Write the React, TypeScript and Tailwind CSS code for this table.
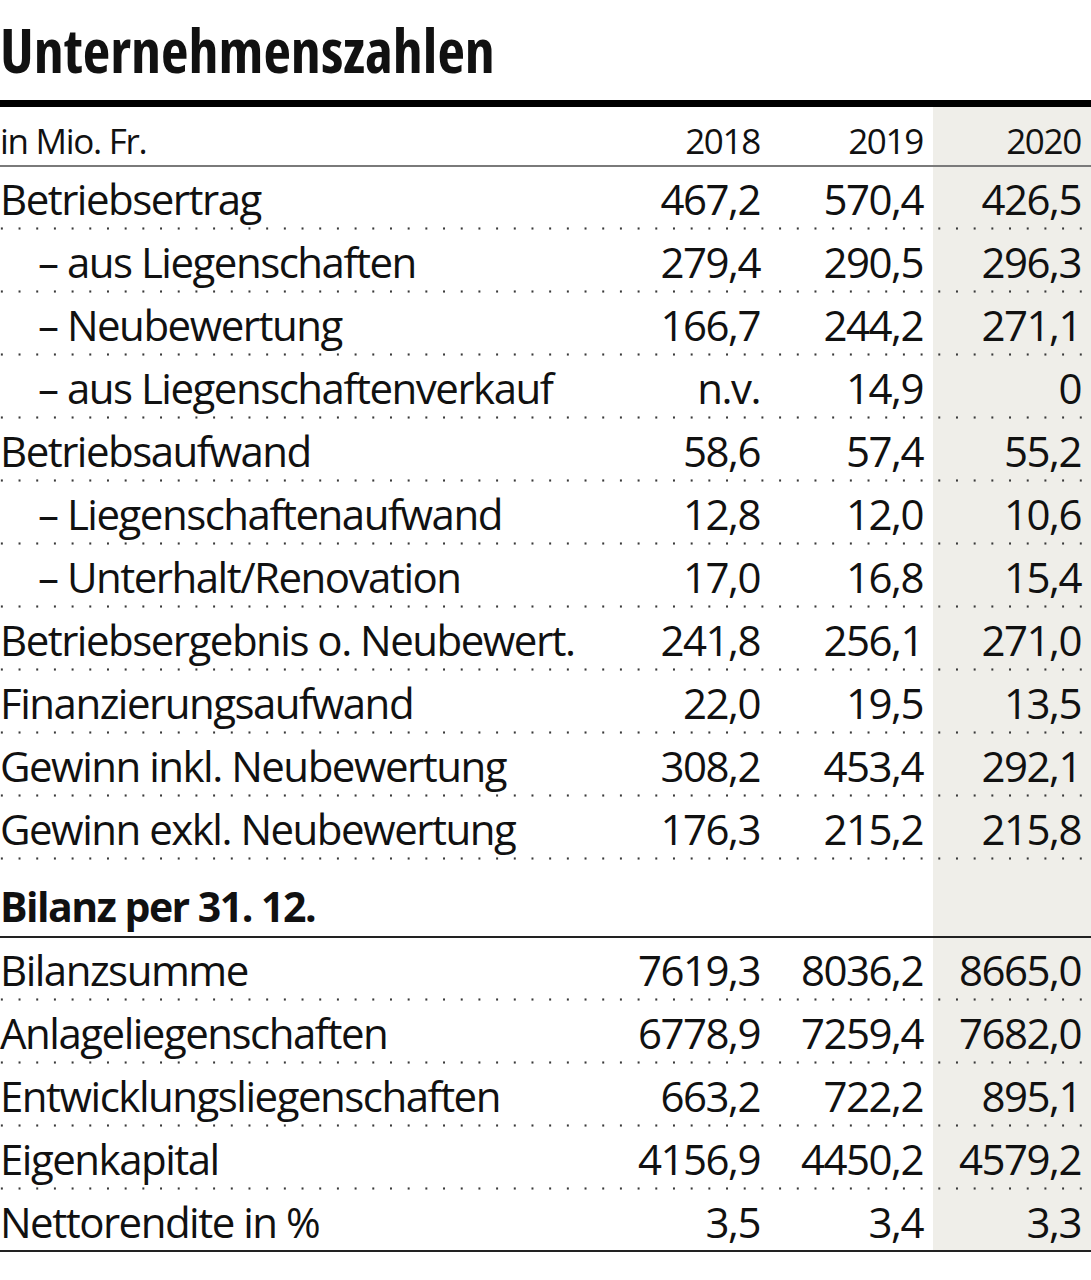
const rows: [string, string, string, string, boolean][] = [
  ['Betriebsertrag', '467,2', '570,4', '426,5', false],
  ['aus Liegenschaften', '279,4', '290,5', '296,3', true],
  ['Neubewertung', '166,7', '244,2', '271,1', true],
  ['aus Liegenschaftenverkauf', 'n.v.', '14,9', '0', true],
  ['Betriebsaufwand', '58,6', '57,4', '55,2', false],
  ['Liegenschaftenaufwand', '12,8', '12,0', '10,6', true],
  ['Unterhalt/Renovation', '17,0', '16,8', '15,4', true],
  ['Betriebsergebnis o. Neubewert.', '241,8', '256,1', '271,0', false],
  ['Finanzierungsaufwand', '22,0', '19,5', '13,5', false],
  ['Gewinn inkl. Neubewertung', '308,2', '453,4', '292,1', false],
  ['Gewinn exkl. Neubewertung', '176,3', '215,2', '215,8', false],
]

const bilanz: [string, string, string, string][] = [
  ['Bilanzsumme', '7619,3', '8036,2', '8665,0'],
  ['Anlageliegenschaften', '6778,9', '7259,4', '7682,0'],
  ['Entwicklungsliegenschaften', '663,2', '722,2', '895,1'],
  ['Eigenkapital', '4156,9', '4450,2', '4579,2'],
  ['Nettorendite in %', '3,5', '3,4', '3,3'],
]

// dotted rule between rows
function Dots() {
  return (
    <div className="h-[3px] w-full bg-[radial-gradient(circle,#3a3a3a_0.9px,transparent_1.4px)] bg-[length:17.7px_3px] bg-[position:-7px_0] bg-repeat-x" />
  )
}

function Row({ label, a, b, c, sub }: { label: string; a: string; b: string; c: string; sub?: boolean }) {
  return (
    <div className="grid grid-cols-[1fr_163px_173px_158px] h-[60px] pt-[4px] leading-[56px] text-[42px] tracking-[-1.5px]">
      <div className={sub ? 'pl-[38px] whitespace-nowrap' : 'whitespace-nowrap'}>
        {sub ? `– ${label}` : label}
      </div>
      <div className="text-right">{a}</div>
      <div className="text-right pr-[10px]">{b}</div>
      <div className="text-right pr-[10px]">{c}</div>
    </div>
  )
}

export default function App() {
  return (
    <div className="w-[1091px] h-[1280px] bg-white text-[#111] font-['Open_Sans',sans-serif]">
      {/* Title */}
      <div className="h-[100px] pt-[20px]">
        <h1 className="text-[60px] leading-[60px] font-bold font-stretch-condensed whitespace-nowrap">
          Unternehmenszahlen
        </h1>
      </div>
      <div className="h-[7px] bg-black" />

      <div className="bg-[linear-gradient(to_right,transparent_933px,#efeee9_933px)]">
        {/* Header row */}
        <div className="grid grid-cols-[1fr_163px_173px_158px] h-[58px] pt-[10px] leading-[48px] text-[35px] tracking-[-1.3px]">
          <div>in Mio. Fr.</div>
          <div className="text-right">2018</div>
          <div className="text-right pr-[10px]">2019</div>
          <div className="text-right pr-[10px]">2020</div>
        </div>
        <div className="h-[2px] bg-[#7a7a7a]" />

        {rows.map(([label, a, b, c, sub]) => (
          <div key={label}>
            <Row label={label} a={a} b={b} c={c} sub={sub} />
            <Dots />
          </div>
        ))}

        {/* Bilanz */}
        <div className="h-[76px] pt-[18px] leading-[56px] text-[41px] font-bold tracking-[-1.5px]">
          Bilanz per 31. 12.
        </div>
        <div className="h-[2px] bg-[#222]" />

        {bilanz.map(([label, a, b, c], i) => (
          <div key={label}>
            <Row label={label} a={a} b={b} c={c} />
            {i < bilanz.length - 1 ? <Dots /> : <div className="h-[2px] bg-[#222]" />}
          </div>
        ))}
      </div>
    </div>
  )
}
